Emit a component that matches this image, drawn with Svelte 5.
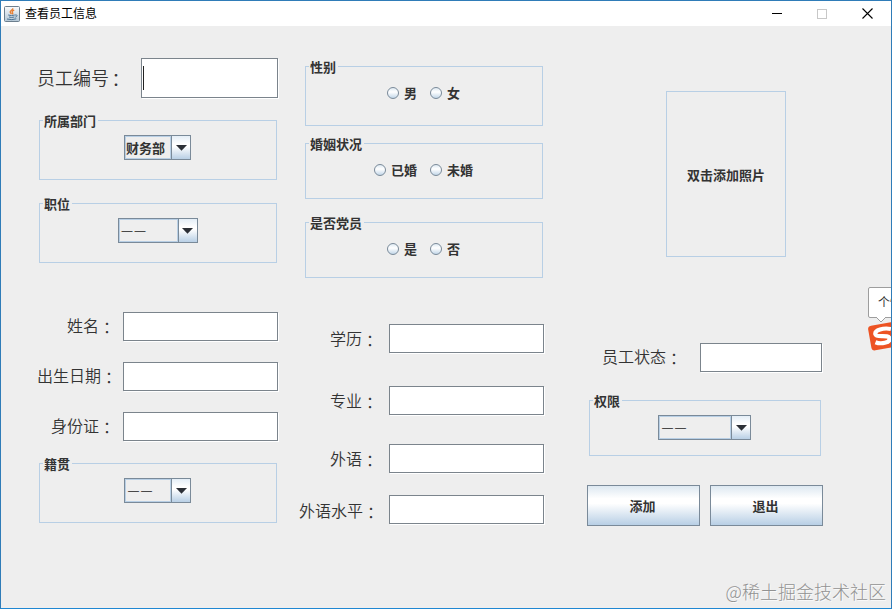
<script>
  const leftRows = [
    { label: '姓名', cls: 'shift' },
    { label: '出生日期', cls: '' },
    { label: '身份证', cls: 'shift' },
  ];
  const eduRows = [
    { label: '学历', cls: 'r1' },
    { label: '专业', cls: 'r2' },
    { label: '外语', cls: 'r3' },
    { label: '外语水平', cls: 'r4' },
  ];
  const radioGroups = [
    { title: '性别', options: ['男', '女'], cls: 'sex' },
    { title: '婚姻状况', options: ['已婚', '未婚'], cls: 'marriage' },
    { title: '是否党员', options: ['是', '否'], cls: 'party' },
  ];
</script>

{#snippet combo(text, width)}
  <div class="combo" style:width="{width}px">
    <span class="value" class:dash={text === '——'}>{text}</span>
    <span class="arrow">
      <svg width="11" height="6" viewBox="0 0 11 6"><path d="M0 0H11L5.5 5.8Z" fill="#2b2f36" /></svg>
    </span>
  </div>
{/snippet}

{#snippet label(text, cls)}
  <span class="label {cls}">{text}<span class="colon">：</span></span>
{/snippet}

<div class="window">
  <header>
    <svg class="java" width="16" height="16" viewBox="0 0 16 16">
      <defs>
        <linearGradient id="jg" x1="0" y1="0" x2="0" y2="1">
          <stop offset="0" stop-color="#fafbfc" /><stop offset="1" stop-color="#b3c6d5" />
        </linearGradient>
      </defs>
      <rect x=".5" y=".5" width="15" height="15" rx="1" fill="url(#jg)" stroke="#6d7f8e" />
      <path d="M8.7 2.2C9.5 4 5.4 4.6 6.2 6.2Q6.6 7.2 7.5 8.1M10.2 4.2C7.8 5.2 7.6 6 8.7 7Q9 7.6 8.3 8.3" fill="none" stroke="#e87b2c" stroke-width="1.3" />
      <path d="M4.2 9Q7.5 10.2 10.8 9M5 11Q7.5 12 10.3 11M3 13Q8 14.4 12.3 12.8M11 9.1C14 8.3 13.4 10.7 11.3 11.2" fill="none" stroke="#4d7495" stroke-width="1" />
    </svg>
    <span class="caption">查看员工信息</span>
    <div class="controls">
      <svg width="10" height="10" viewBox="0 0 10 10"><path d="M0 4.5H10" stroke="#000" /></svg>
      <svg width="10" height="10" viewBox="0 0 10 10"><rect x=".5" y=".5" width="9" height="9" fill="none" stroke="#c8c8c8" /></svg>
      <svg width="11" height="11" viewBox="0 0 11 11"><path d="M.5 .5L10.5 10.5M10.5 .5L.5 10.5" stroke="#000" stroke-width="1.1" /></svg>
    </div>
  </header>

  <main>
    <section class="col one">
      <div class="row id-row">
        {@render label('员工编号', 'big')}
        <div class="field id-field"><i class="caret"></i></div>
      </div>
      <div class="group dept"><span class="title">所属部门</span>{@render combo('财务部', 67)}</div>
      <div class="group job"><span class="title">职位</span>{@render combo('——', 80)}</div>
      <div class="rows">
        {#each leftRows as r}
          <div class="row">{@render label(r.label, r.cls)}<div class="field"></div></div>
        {/each}
      </div>
      <div class="group origin"><span class="title">籍贯</span>{@render combo('——', 67)}</div>
    </section>

    <section class="col two">
      {#each radioGroups as g}
        <div class="group {g.cls}">
          <span class="title">{g.title}</span>
          <div class="radios">
            {#each g.options as o}
              <span class="radio"><i></i><b>{o}</b></span>
            {/each}
          </div>
        </div>
      {/each}
      {#each eduRows as r}
        <div class="row {r.cls}">{@render label(r.label, '')}<div class="field"></div></div>
      {/each}
    </section>

    <section class="col three">
      <div class="photo">双击添加照片</div>
      <div class="row status">{@render label('员工状态', '')}<div class="field short"></div></div>
      <div class="group auth"><span class="title">权限</span>{@render combo('——', 93)}</div>
      <div class="buttons">
        <button>添加</button>
        <button>退出</button>
      </div>
    </section>
  </main>

  <div class="watermark">@稀土掘金技术社区</div>

  <div class="ime">
    <div class="bubble">个性</div>
    <svg width="24" height="36" viewBox="0 0 24 36">
      <path d="M8 0L13 5L18 0" fill="#fff" stroke="#9d9d9d" />
      <g transform="rotate(-10 14 19)">
        <rect x="1.5" y="7" width="27" height="25" rx="3.5" fill="#ed5323" />
        <path d="M24 13.7C17 10.8 7.5 12 7.8 16.1C8 20.2 21 18 21 22.7C21 27.1 11.5 27.1 6.5 24" fill="none" stroke="#fff" stroke-width="4.2" />
      </g>
    </svg>
  </div>
</div>

<style>
  .window {
    position: relative;
    box-sizing: border-box;
    width: 892px;
    height: 609px;
    overflow: hidden;
    border: 1px solid #2f7cb8;
    border-bottom-color: #1f87d2;
    background: #eee;
    color: #333;
    font-family: 'Noto Sans CJK SC', sans-serif;
    font-size: 13px;
  }
  header {
    display: flex;
    align-items: center;
    box-sizing: border-box;
    height: 25px;
    padding: 0 18px 0 3px;
    background: #fff;
    color: #000;
  }
  .caption { margin-left: 5px; font-size: 12px; line-height: 24px; position: relative; top: -1px; }
  .controls { display: flex; align-items: center; gap: 35px; margin-left: auto; }
  svg { display: block; flex: none; }
  main { display: flex; align-items: flex-start; }
  .col { display: flex; flex-direction: column; align-items: flex-end; flex: none; }
  .one { width: 277px; padding-top: 32px; }
  .two { width: 266px; padding-top: 40px; }
  .three { width: 279px; padding-top: 65px; }

  .row { display: flex; align-items: center; height: 29px; }
  .label { font-size: 16px; font-weight: 350; line-height: 28px; white-space: nowrap; margin-right: 11px; position: relative; top: -1px; }
  .colon { font-family: 'Noto Sans CJK TC', sans-serif; position: relative; top: 2px; }
  .one .label { margin-right: 6px; top: -2px; }
  .one .label.shift { margin-right: 8px; }
  .one .label.big { font-size: 18px; margin-right: 14px; top: -1px; }
  .big .colon { left: -2px; }
  .status .label { margin-right: 18px; top: -2px; }
  .field {
    box-sizing: border-box;
    width: 155px;
    height: 29px;
    border: 1px solid #7b848c;
    background: #fff;
    box-shadow: 1px 1px 0 #fff;
  }
  .id-row { height: 40px; }
  .id-field { width: 137px; height: 40px; padding: 7px 1px; }
  .short { width: 122px; }
  .caret { display: block; width: 1px; height: 24px; background: #222; }

  .group {
    display: flex;
    flex-direction: column;
    align-items: center;
    box-sizing: border-box;
    width: 238px;
    height: 60px;
    margin-right: 1px;
    border: 1px solid #b8cfe5;
  }
  .title {
    align-self: flex-start;
    height: 16px;
    margin: -9px 0 7px 3px;
    padding: 0 2px 0 1px;
    background: #eee;
    font-weight: 700;
    line-height: 17px;
  }
  .dept { margin-top: 22px; }
  .job { margin-top: 23px; }
  .origin { margin-top: 22px; }
  .rows { display: flex; flex-direction: column; align-items: flex-end; gap: 21px; margin-top: 49px; }
  .marriage { height: 56px; margin-top: 17px; }
  .party { height: 56px; margin-top: 23px; }
  .r1 { margin-top: 46px; }
  .r2 { margin-top: 33px; }
  .r3 { margin-top: 29px; }
  .r4 { margin-top: 22px; }
  .r4 .label { top: 0; margin-right: 10px; }

  .combo {
    display: flex;
    box-sizing: border-box;
    height: 25px;
    margin-right: 1px;
    border: 1px solid #7a8a99;
    font-weight: 700;
    line-height: 23px;
  }
  .value { flex: 1; box-sizing: border-box; padding-left: 1px; box-shadow: inset 0 0 0 1px #b8cfe5; white-space: nowrap; }
  .dash { padding-left: 3px; font-family: 'Liberation Sans', sans-serif; font-size: 11px; font-weight: 400; letter-spacing: 2px; color: #222; }
  .arrow {
    display: flex;
    align-items: center;
    justify-content: center;
    width: 18px;
    border-left: 1px solid #7a8a99;
    background: linear-gradient(#e4eef7, #fff 35%, #fff 45%, #b8cfe5);
  }

  .radios { display: flex; gap: 13px; margin: 3px 1px 0 0; }
  .radio { display: flex; align-items: center; gap: 5px; height: 18px; }
  .radio i {
    box-sizing: border-box;
    width: 12px;
    height: 12px;
    border: 1px solid #7a8a99;
    border-radius: 50%;
    background: linear-gradient(#dfeaf3, #fff 40%, #c3d7e9);
  }
  .radio b { line-height: 20px; }

  .photo {
    box-sizing: border-box;
    width: 120px;
    height: 166px;
    margin-right: 37px;
    border: 1px solid #b8cfe5;
    text-align: center;
    font-weight: 700;
    line-height: 166px;
  }
  .status { margin: 86px 1px 0 0; }
  .auth { width: 232px; height: 56px; margin: 28px 2px 0 0; }
  .buttons { display: flex; gap: 10px; margin-top: 29px; }
  button {
    box-sizing: border-box;
    width: 113px;
    height: 41px;
    padding: 0 2px 0 0;
    border: 1px solid #7a8a99;
    border-radius: 0;
    background: linear-gradient(#dde8f1, #fff 32%, #fff 45%, #b8cfe5);
    color: #333;
    font: 700 13px 'Noto Sans CJK SC', sans-serif;
  }

  .watermark {
    position: absolute;
    right: 5px;
    bottom: 4px;
    color: #929292;
    font-size: 18px;
    font-weight: 300;
    line-height: 26px;
    text-shadow: 1px 1px 0 #fafafa;
    white-space: nowrap;
  }
  .ime { position: absolute; left: 867px; top: 286px; width: 24px; overflow: hidden; }
  .bubble {
    box-sizing: border-box;
    width: 40px;
    height: 31px;
    padding-left: 9px;
    border: 1px solid #9d9d9d;
    border-radius: 2px;
    background: #fff;
    font-size: 12px;
    line-height: 28px;
    white-space: nowrap;
  }
  .ime svg { margin-top: -1px; }
</style>
